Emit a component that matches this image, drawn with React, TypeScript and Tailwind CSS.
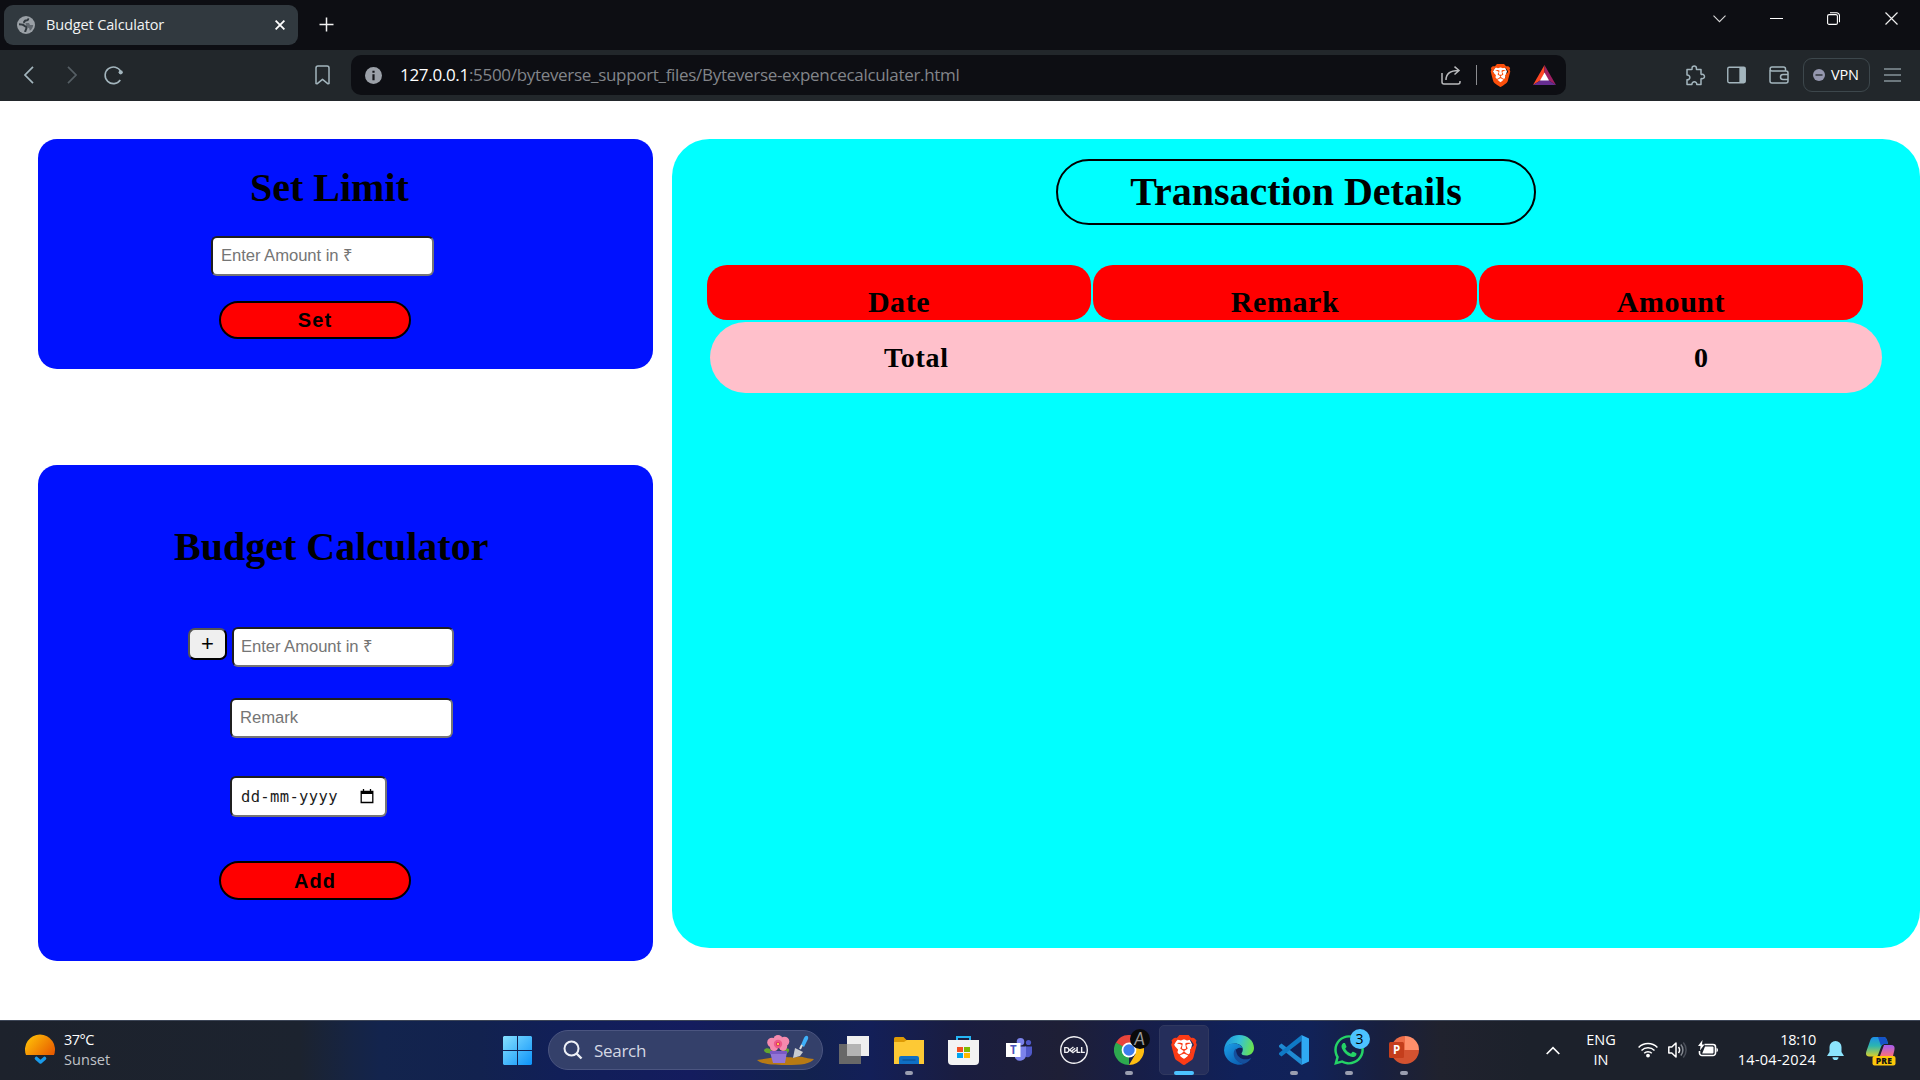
import React from "react";
import { SiBrave, SiDell } from "react-icons/si";
import { FaWhatsapp } from "react-icons/fa";

const UI = "font-['Open_Sans','Noto_Sans',sans-serif]";

function Globe() {
  return (
    <svg width="18" height="18" viewBox="0 0 18 18">
      <circle cx="9" cy="9" r="9" fill="#9aa0a6" />
      <path d="M11.200 2.300c.2 1.700-.8 2.300-2.400 2.300-1.400 0-1.300 1.800-2.600 2M2 8.300c2.600 0 4.300.2 5.200 1.300.7 1 2.300.6 2.300 2.200 0 1.500-1.200 2-1.300 4.200" fill="none" stroke="#31393f" strokeWidth="2" strokeLinejoin="round" />
      <path d="M8.500 7h3.500l1 2h3.200c-.2 2.500-1.400 4.500-3.400 5.800l-.6-2.600-3-1.500z" fill="#31393f" opacity=".55" />
    </svg>
  );
}

function BrowserTop() {
  return (
    <div className="flex h-[50px] bg-[#0d0e13]">
      <div className="mt-[5px] ml-1 flex h-10 w-[294px] items-center rounded-[9px] bg-[#31393f] pl-[13px]">
        <Globe />
        <span className="ml-[11px] w-[220px] text-[14.5px] leading-5 tracking-[-0.13px] text-[#f2f4f5]">Budget Calculator</span>
        <svg className="ml-[9px] shrink-0" width="10" height="10" viewBox="0 0 10 10" stroke="#fff" strokeWidth="1.8">
          <path d="M.6.6l8.800 8.800M9.400.6L.6 9.400" />
        </svg>
      </div>
      <svg className="mt-[17px] ml-[21px]" width="15" height="15" viewBox="0 0 15 15" stroke="#f1f1f1" strokeWidth="1.5">
        <path d="M7.500.5v14M.5 7.500h14" />
      </svg>
      <div className="ml-auto flex h-[37px] items-center">
        <svg className="mr-[44px]" width="13" height="8" viewBox="0 0 13 8" fill="none" stroke="#d8d8d8" strokeWidth="1.100">
          <path d="M.5.700l6 6 6-6" />
        </svg>
        <div className="mr-[44px] h-px w-[13px] bg-white" />
        <svg className="mr-[45px]" width="13" height="13" viewBox="0 0 13 13" fill="none" stroke="#fff" strokeWidth="1.100">
          <rect x=".6" y="2.600" width="9.800" height="9.800" rx="1.500" />
          <path d="M3 .7h6.500a3 3 0 0 1 3 3v6.500" />
        </svg>
        <svg className="mr-[22px]" width="13" height="13" viewBox="0 0 13 13" stroke="#eee" strokeWidth="1.200">
          <path d="M.5.5l12 12M12.500.5l-12 12" />
        </svg>
      </div>
    </div>
  );
}

function BraveShield({ w, h, color }: { w: number; h: number; color: string }) {
  return (
    <div className="grid place-items-center">
      <svg className="col-start-1 row-start-1" width={w * 0.7} height={h * 0.72} viewBox="0 0 20 24" fill="#fff">
        <path d="M3 0h14l3 6-3 12-7 6-7-6L0 6z" />
      </svg>
      <SiBrave className="col-start-1 row-start-1" size={h} color={color} />
    </div>
  );
}

function Toolbar() {
  return (
    <div className="flex h-[51px] items-center bg-[#22272b] pb-px">
      <svg className="ml-[24px]" width="10" height="18" viewBox="0 0 10 18" fill="none" stroke="#a3b5bd" strokeWidth="1.700">
        <path d="M9 .8L1 9l8 8.200" />
      </svg>
      <svg className="ml-[33px]" width="10" height="18" viewBox="0 0 10 18" fill="none" stroke="#555e64" strokeWidth="1.700">
        <path d="M1 .8L9 9l-8 8.200" />
      </svg>
      <svg className="ml-[27px]" width="20" height="20" viewBox="0 0 20 20" fill="none" stroke="#a3b5bd" strokeWidth="1.600">
        <path d="M16.800 6.500A8.300 8.300 0 1 0 16.300 15" />
        <circle cx="16.700" cy="7.300" r="2.100" fill="#a3b5bd" stroke="none" />
      </svg>
      <svg className="ml-[191px]" width="15" height="20" viewBox="0 0 15 20" fill="none" stroke="#a3b5bd" strokeWidth="1.500" strokeLinejoin="round">
        <path d="M1 3a2 2 0 0 1 2-2h9a2 2 0 0 1 2 2v15.500l-1 .3-5.500-4.500L2 18.800l-1-.3z" />
      </svg>
      <div className="ml-[21px] flex h-10 w-[1215px] items-center rounded-[10px] bg-[#0d0e13] pl-[14px]">
        <svg width="17" height="17" viewBox="0 0 17 17">
          <circle cx="8.500" cy="8.500" r="8.500" fill="#9ba0a8" />
          <path d="M7.400 3.800h2.200v2H7.400zM7.400 7.200h2.200v6H7.400z" fill="#15161b" />
        </svg>
        <span className="ml-[18px] text-[17px] leading-6 tracking-[-0.31px] whitespace-nowrap text-[#82858a]">
          <span className="text-white">127.0.0.1</span>:5500/byteverse_support_files/Byteverse-expencecalculater.html
        </span>
        <svg className="ml-auto" width="20" height="19" viewBox="0 0 20 19" fill="none" stroke="#b9babd" strokeWidth="1.500">
          <path d="M1 7v9a2 2 0 0 0 2 2h14a2 2 0 0 0 2-2v-1M5 14c0-6 4-9.500 12.500-9.500M13.500.6L18 4.500l-4.500 4" />
        </svg>
        <div className="ml-[15px] h-5 w-px bg-[#8b8c90]" />
        <div className="mr-px ml-[13px] flex w-5 justify-center">
          <BraveShield w={20} h={23} color="#fb4f0b" />
        </div>
        <svg className="mr-[10px] ml-[22px]" width="23" height="20" viewBox="0 0 23 20">
          <path d="M11.500 0L0 20l8-5 3.500-7z" fill="#ff4724" />
          <path d="M11.500 0L23 20l-8-5-3.500-7z" fill="#9e1f63" />
          <path d="M0 20h23l-8-5H8z" fill="#662d91" />
          <path d="M11.500 7.500L16 15.500H7z" fill="#fff" />
        </svg>
      </div>
      <svg className="ml-[119px]" width="21" height="21" viewBox="0 0 21 21" fill="none" stroke="#a3b5bd" strokeWidth="1.500" strokeLinejoin="round">
        <path d="M2 4.500h4.500c.6 0 .8-.4.6-1-.6-3.300 4.800-3.300 4.300 0-.1.6.1 1 .7 1H16v4.200c0 .6.4.8 1 .7 3.300-.5 3.300 4.700 0 4.200-.6-.1-1 .1-1 .7V19.500h-4.200c.3-3.700-5.200-3.700-4.900 0H2v-4.700c3.800.3 3.800-5 0-4.800z" />
      </svg>
      <svg className="ml-[21px]" width="19" height="18" viewBox="0 0 20 18">
        <rect x=".8" y=".8" width="18.400" height="16.400" rx="1.500" fill="none" stroke="#a3b5bd" strokeWidth="1.500" />
        <path d="M13 1h6v16h-6z" fill="#a3b5bd" />
      </svg>
      <svg className="ml-[23px]" width="20" height="18" viewBox="0 0 20 18" fill="none" stroke="#a3b5bd" strokeWidth="1.500">
        <path d="M1 4v11a2 2 0 0 0 2 2h14a2 2 0 0 0 2-2V7a2 2 0 0 0-2-2H3C.5 5 .5 1 3 1h11.500a2 2 0 0 1 2 2v2M19 8.500h-5a2.500 2.500 0 0 0 0 5h5" />
      </svg>
      <div className="ml-[14px] flex h-[34px] w-[67px] items-center rounded-[9px] border border-[#3d474c] pl-[9px]">
        <svg width="12" height="12" viewBox="0 0 12 12">
          <circle cx="6" cy="6" r="6" fill="#9496ad" />
          <path d="M2.500 6h7" stroke="#22272b" strokeWidth="1.300" />
        </svg>
        <span className="ml-[6px] text-[14.500px] leading-5 font-medium tracking-[-0.2px] text-white">VPN</span>
      </div>
      <svg className="ml-[14px]" width="17" height="14" viewBox="0 0 17 14" stroke="#86949b" strokeWidth="1.500">
        <path d="M0 1h17M0 7h17M0 13h17" />
      </svg>
    </div>
  );
}

const FIELD =
  "flex items-center rounded-[6px] border-2 border-t-[#1f1f1f] border-l-[#1f1f1f] border-r-[#767676] border-b-[#767676] bg-white pl-[8px] text-[16.67px] leading-5 text-[#757575] tracking-[-0.07px]";

function RedButton({ children, className }: { children: React.ReactNode; className: string }) {
  return (
    <button className={`${className} flex w-[192px] items-center justify-center rounded-[20px] border-2 border-black bg-[#ff0000] text-[20px] leading-6 font-bold tracking-[1.1px] text-black`}>
      {children}
    </button>
  );
}

function LeftColumn() {
  return (
    <div className="w-[615px] font-['Liberation_Sans',Arial,sans-serif]">
      <section className="flex h-[230px] flex-col items-start rounded-[19px] bg-[#0011ff] pt-[27px]">
        <h1 className="ml-[212px] font-['Liberation_Serif',serif] text-[40px] leading-[44px] font-bold text-black">Set Limit</h1>
        <div className={`${FIELD} mt-[26px] ml-[173px] h-10 w-[223px]`}>Enter Amount in ₹</div>
        <RedButton className="mt-[25px] ml-[181px] h-[38px]">Set</RedButton>
      </section>
      <section className="mt-[96px] flex h-[496px] flex-col items-start rounded-[19px] bg-[#0011ff] pt-[60px]">
        <h1 className="ml-[136px] font-['Liberation_Serif',serif] text-[40px] leading-[44px] font-bold text-black">Budget Calculator</h1>
        <div className="mt-[58px] ml-[150px] flex items-start">
          <button className="mt-px flex h-8 w-[39px] items-center justify-center rounded-[7px] border-2 border-t-[#555] border-r-black border-b-black border-l-[#555] bg-[#efefef] text-[22px] leading-5 text-black">+</button>
          <div className={`${FIELD} ml-[5px] h-10 w-[222px] -indent-px`}>Enter Amount in ₹</div>
        </div>
        <div className={`${FIELD} mt-[31px] ml-[192px] h-10 w-[223px]`}>Remark</div>
        <div className={`${FIELD} mt-[38px] ml-[192px] h-[41px] w-[157px]`}>
          <span className="w-[120px] pl-px font-['DejaVu_Sans_Mono',monospace] text-[15.500px] tracking-[0.35px] text-[#1c1c1c]">dd-mm-yyyy</span>
          <svg width="14" height="15" viewBox="0 0 14 15">
            <path d="M1.200 2.500h11.600v11H1.200zM3.500 0v3M10.500 0v3" fill="none" stroke="#000" strokeWidth="1.300" />
            <path d="M1 2h12v3H1z" />
          </svg>
        </div>
        <RedButton className="mt-[44px] ml-[181px] h-[39px] pt-px">Add</RedButton>
      </section>
    </div>
  );
}

function RightPanel() {
  return (
    <section className="ml-[19px] flex h-[809px] w-[1248px] flex-col rounded-[37.5px] bg-[#00ffff] pt-5 font-['Liberation_Serif',serif] font-bold text-black">
      <h1 className="ml-[384px] h-[66px] w-[480px] rounded-[33px] border-2 border-black pt-[9px] text-center text-[40px] leading-[44px]">
        Transaction Details
      </h1>
      <div className="mt-10 ml-[35px] flex gap-[2px] text-center text-[30px] leading-[34px] tracking-[0.55px]">
        {["Date", "Remark", "Amount"].map((t) => (
          <div key={t} className="h-[55px] w-[384px] rounded-[20px] bg-[#ff0000] pt-[20px]">
            {t}
          </div>
        ))}
      </div>
      <div className="mt-[2px] ml-[38px] flex h-[71px] w-[1172px] rounded-[36px] bg-[#ffc0cb] pt-[20px] text-[28px] leading-8">
        <span className="ml-[174px] tracking-[0.7px]">Total</span>
        <span className="mr-[174px] ml-auto">0</span>
      </div>
    </section>
  );
}

function TaskCell({ children, run, active }: { children: React.ReactNode; run?: boolean; active?: boolean }) {
  return (
    <div className="flex w-[55px] shrink-0 justify-center">
      <div className={active ? "relative mt-[4px] flex h-[50px] w-[50px] items-center justify-center rounded-[5px] border border-[#30385f] bg-[#252e5b]" : "relative mt-[4px] flex h-[50px] w-[50px] items-center justify-center"}>
        {children}
        {run && <div className="absolute bottom-0 left-[21px] h-1 w-2 rounded-full bg-[#9a9eb0]" />}
        {active && <div className="absolute -bottom-px left-[14px] h-1 w-5 rounded-full bg-[#4cc2ff]" />}
      </div>
    </div>
  );
}

function Taskbar() {
  return (
    <footer className="flex h-[60px] border-t border-[#3d4657] bg-[linear-gradient(90deg,#1d222c_0px,#1c232f_300px,#162443_350px,#13244d_380px,#12224f_480px,#111f58_560px,#141c5e_690px,#12224e_800px,#131f58_870px,#1a1d40_960px,#1e1f36_1060px,#171e48_1140px,#10215a_1240px,#112258_1310px,#181f3f_1380px,#20222e_1440px,#1c212b_1530px,#1c212b_1920px)]">
      <svg className="mt-[12px] ml-[25px]" width="30" height="32" viewBox="0 0 30 32">
        <defs>
          <linearGradient id="sun" x1="0" y1=".2" x2="1" y2=".8">
            <stop offset="0" stopColor="#ffc107" />
            <stop offset="1" stopColor="#e85d00" />
          </linearGradient>
        </defs>
        <path d="M1 22A15 15 0 1 1 29 22z" fill="url(#sun)" />
        <path d="M11.500 25.500l4 3.500 4-3.500" fill="none" stroke="#1a9bea" strokeWidth="3.600" strokeLinecap="round" strokeLinejoin="round" />
      </svg>
      <div className="mt-[9px] ml-[9px] w-[439px] text-[14.500px] leading-5 text-white">
        <div className="tracking-[-0.5px]">37°C</div>
        <div className="tracking-[0.050px] text-[#c0c3c8]">Sunset</div>
      </div>
      <svg className="mt-[15px]" width="29" height="29" viewBox="0 0 29 29">
        <defs>
          <linearGradient id="win" x1="0" y1="0" x2="1" y2="1" gradientUnits="objectBoundingBox">
            <stop offset="0" stopColor="#86e0ff" />
            <stop offset="1" stopColor="#0c93fa" />
          </linearGradient>
        </defs>
        <path d="M1 0h13v14H0V1zM15 0h13l1 1v13H15zM0 15h14v14H1l-1-1zM15 15h14v13l-1 1H15z" fill="url(#win)" />
      </svg>
      <div className="mt-[9px] ml-[16px] flex h-10 w-[275px] items-center rounded-full border border-[#4b5580] bg-[#34406a] pl-[14px]">
        <svg width="20" height="20" viewBox="0 0 20 20" fill="none" stroke="#eef0f6" strokeWidth="2">
          <circle cx="8.500" cy="8.500" r="7" />
          <path d="M13.500 13.500l5 5" strokeWidth="2.400" />
        </svg>
        <span className="ml-[11px] pt-px text-[17px] leading-6 tracking-[-0.3px] text-[#d4d8e4]">Search</span>
        <svg className="mr-[8px] ml-auto" width="57" height="30" viewBox="0 0 57 30">
          <path d="M0 25c8-1 15-3 26-3 6 0 10 1 14 0 6-1 9 2 17 2-4 5-12 6-28 6S4 29 0 25z" fill="#b87a14" />
          <path d="M7 15c2-3 7-2 9 3-4 1-9 0-9-3zM32 14c-4-2-8 1-8 5 4 1 9-1 8-5z" fill="#63a62f" />
          <path d="M13 17h17l-2 11h-12z" fill="#9375d8" />
          <path d="M13 16h17v3H13z" fill="#7959c4" />
          <g fill="#f58aae">
            <circle cx="21" cy="4.500" r="4.500" />
            <circle cx="15" cy="7.500" r="4.800" />
            <circle cx="27.500" cy="6.500" r="4.800" />
            <circle cx="17" cy="12" r="4" />
            <circle cx="26" cy="11.500" r="4.200" />
          </g>
          <circle cx="21" cy="9" r="4.200" fill="#ec5a8a" />
          <circle cx="21" cy="9" r="2" fill="#d9265f" />
          <circle cx="21" cy="9" r="1.200" fill="#ffca4a" />
          <path d="M47 3c2-4 5-2 4 1l-4 8-3-2z" fill="#3fb0fa" />
          <path d="M45 10l-2 4" stroke="#ddd" strokeWidth="2" />
          <path d="M38 13l8 4-3 4-7 2z" fill="#c9ccd1" />
        </svg>
      </div>
      <div className="ml-[3px] flex">
        <TaskCell>
          <svg width="30" height="28" viewBox="0 0 30 28">
            <path d="M0 8h22v20H0z" fill="#686868" />
            <path d="M8 0h22v20H8z" fill="#efefef" />
            <path d="M8 8h14v12H8z" fill="#b4b4b4" />
          </svg>
        </TaskCell>
        <TaskCell run>
          <svg width="30" height="27" viewBox="0 0 30 27">
            <path d="M0 1.500Q0 0 1.500 0h8l3 3H30v8H0z" fill="#dd9a05" />
            <path d="M0 5h10l3-2h17v24H0z" fill="#fdc935" />
            <path d="M5 27v-6q0-2 2-2h16q2 0 2 2v6z" fill="#0f6fc4" />
            <path d="M8.500 23h13" stroke="#0a4f94" strokeWidth="1.200" />
          </svg>
        </TaskCell>
        <TaskCell>
          <svg width="31" height="29" viewBox="0 0 31 29">
            <path d="M9 6V1h13v5" fill="none" stroke="#25b5f5" strokeWidth="2" />
            <path d="M0 4h31v21q0 4-4 4H4q-4 0-4-4z" fill="#f3f3f3" />
            <path d="M9 11h6v5H9z" fill="#f25022" />
            <path d="M16 11h6v5h-6z" fill="#7fba00" />
            <path d="M9 17h6v5H9z" fill="#00a4ef" />
            <path d="M16 17h6v5h-6z" fill="#ffb900" />
          </svg>
        </TaskCell>
        <TaskCell>
          <svg width="26" height="24" viewBox="0 0 26 24">
            <circle cx="22.500" cy="4.500" r="2.600" fill="#5059c9" />
            <circle cx="14.500" cy="3.800" r="3.800" fill="#7b83eb" />
            <path d="M19 8.500h7V15a4.500 4.500 0 0 1-7 3.500z" fill="#5059c9" />
            <path d="M9 8.500h11V17a6 6 0 0 1-11 3z" fill="#7b83eb" />
            <path d="M0 5h14.500v14H0z" fill="#fff" />
            <text x="7.300" y="16" fontSize="11.500" fontWeight="700" fontFamily="Open Sans" fill="#4b53bc" textAnchor="middle">T</text>
          </svg>
        </TaskCell>
        <TaskCell>
          <SiDell size={28} color="#f1f1f4" />
        </TaskCell>
        <TaskCell run>
          <svg width="30" height="30" viewBox="0 0 30 30">
            <path d="M15 15L2 7.500A15 15 0 0 1 28 7.500z" fill="#e8453c" />
            <path d="M15 15v15A15 15 0 0 1 2 7.500z" fill="#2da94f" />
            <path d="M15 7.500h13A15 15 0 0 1 15 30l6.500-11z" fill="#fdbd12" />
            <path d="M2 7.500l6.500 11.250L15 15z" fill="#2da94f" />
            <path d="M2 7.500h13v7z" fill="#e8453c" />
            <circle cx="15" cy="15" r="7.400" fill="#fff" />
            <circle cx="15" cy="15" r="5.700" fill="#3b7ded" />
          </svg>
          <div className="absolute top-[4px] left-[26px] flex h-5 w-5 items-center justify-center rounded-full bg-[#0a0a0a] font-['Lato',sans-serif] text-[17px] leading-5 italic text-[#9a9a9a]">A</div>
        </TaskCell>
        <TaskCell active>
          <BraveShield w={26} h={30} color="#fb3b16" />
        </TaskCell>
        <TaskCell>
          <svg width="30" height="30" viewBox="0 0 30 30">
            <defs>
              <linearGradient id="edgeTop" x1="0" y1=".3" x2="1" y2=".5">
                <stop offset="0" stopColor="#1c93dc" />
                <stop offset=".5" stopColor="#35c1d8" />
                <stop offset="1" stopColor="#6ae34c" />
              </linearGradient>
              <linearGradient id="edgeLow" x1="0" y1="0" x2=".8" y2="1">
                <stop offset="0" stopColor="#1ba0e8" />
                <stop offset="1" stopColor="#0b5cb0" />
              </linearGradient>
            </defs>
            <path d="M0 15C1 6 7 0 15 0c9 0 15 6 15 13 0 5-4 7.500-8 7.500-3 0-4.500-1-4.500-2 0-.8 1.300-1.500 1.300-4C18.800 11 15 8.500 11 8.500 5 8.500 1 12 0 15z" fill="url(#edgeTop)" />
            <path d="M0 15c1-4 5-6.500 10-6.500 4 0 7.500 2 8.500 4.500-6-1.500-9 3-7.500 8 1.500 5 6.500 8 10 7.500A15 15 0 0 1 0 15z" fill="url(#edgeLow)" />
            <path d="M11.800 13.500c-5 5-.5 15 9 15 3-1 5-3 6.500-5.500-6 3-15 1.500-15.500-9.500z" fill="#154f9c" />
          </svg>
        </TaskCell>
        <TaskCell run>
          <svg width="30" height="30" viewBox="0 0 30 30">
            <path d="M0 10.500L2.500 8.500l20 15.500v6L0 12z" fill="#1f8ad2" />
            <path d="M0 19.500L2.500 21.500l20-15.500V0L0 18z" fill="#0f79c5" />
            <path d="M22.500 0L30 3.500v23L22.500 30z" fill="#2fa9f4" />
          </svg>
        </TaskCell>
        <TaskCell run>
          <FaWhatsapp size={34} color="#25d366" />
          <div className="absolute top-[4px] left-[26px] flex h-5 w-5 items-center justify-center rounded-full bg-[#4cc2ff] text-[14px] leading-5 text-black">3</div>
        </TaskCell>
        <TaskCell run>
          <svg width="30" height="28" viewBox="0 0 30 28">
            <path d="M16 0a14 14 0 0 0-14 14h14z" fill="#ed6c47" />
            <path d="M16 0a14 14 0 0 1 14 14H16z" fill="#ff8f6b" />
            <path d="M2 14h28a14 14 0 0 1-28 0z" fill="#d35230" />
            <rect x="0" y="6" width="15" height="16" rx="1.500" fill="#c43e1c" />
            <text x="7.500" y="18" fontSize="11.500" fontWeight="700" fontFamily="Open Sans" fill="#fff" textAnchor="middle">P</text>
          </svg>
        </TaskCell>
      </div>
      <svg className="mt-[25px] ml-[115px]" width="14" height="9" viewBox="0 0 14 9" fill="none" stroke="#fff" strokeWidth="1.700">
        <path d="M.7 8L7 1.700 13.300 8" />
      </svg>
      <div className="mt-[9px] ml-[21px] w-10 text-center text-[14.500px] leading-5 text-white">
        ENG
        <br />
        IN
      </div>
      <svg className="mt-[21px] ml-[17px]" width="20" height="16" viewBox="0 0 20 16" fill="none" stroke="#fff" strokeWidth="1.500">
        <path d="M.6 5.500a13.300 13.300 0 0 1 18.800 0M3.500 8.500a9.200 9.200 0 0 1 13 0M6.200 11.300a5.300 5.300 0 0 1 7.600 0" />
        <circle cx="10" cy="13.600" r="1.900" fill="#fff" stroke="none" />
      </svg>
      <svg className="mt-[20px] ml-[10px]" width="20" height="18" viewBox="0 0 20 18" fill="none" stroke="#fff" strokeWidth="1.500">
        <path d="M.8 6v6h3l4.200 4V2L3.800 6zM10.500 6a5 5 0 0 1 0 6" strokeLinejoin="round" />
        <path d="M12.800 3.600a8 8 0 0 1 0 10.800" stroke="#858a92" />
        <path d="M15.300 1.500a11.500 11.500 0 0 1 0 15" stroke="#4b505a" />
      </svg>
      <svg className="mt-[19px] ml-[10px]" width="21" height="18" viewBox="0 0 21 18">
        <path d="M6.500 4.500H15a2.500 2.500 0 0 1 2.500 2.500v6a2.500 2.500 0 0 1-2.500 2.500H4A2.500 2.500 0 0 1 1.500 13v-2" fill="none" stroke="#fff" strokeWidth="1.600" />
        <path d="M7 6.500h7.500q1 0 1 1v5q0 1-1 1H4.200z" fill="#fff" />
        <path d="M18.500 8q1.500 0 1.500 2t-1.500 2zM4.500 0L0 6h2.500L2 10.500 6.500 4.500H4z" fill="#fff" />
      </svg>
      <div className="mt-[9px] ml-[7px] w-[90px] text-right text-[14.500px] leading-5 text-white">
        <div className="tracking-[-0.25px]">18:10</div>
        <div className="tracking-[0.25px]">14-04-2024</div>
      </div>
      <svg className="mt-[20px] ml-[11px]" width="17" height="19" viewBox="0 0 17 19" fill="#8ce4fd">
        <path d="M8.500 0a6 6 0 0 1 6 6v5l2.500 4H0l2.500-4V6a6 6 0 0 1 6-6zM5.500 16.200h6a3 2.800 0 0 1-6 0z" />
      </svg>
      <svg className="mt-[16px] ml-[22px]" width="30" height="29" viewBox="0 0 30 29">
        <defs>
          <linearGradient id="copA" x1="0" y1="0" x2="0" y2="1">
            <stop offset="0" stopColor="#1e8fe8" />
            <stop offset=".45" stopColor="#2bb5b0" />
            <stop offset="1" stopColor="#d8cf2a" />
          </linearGradient>
          <linearGradient id="copB" x1="0" y1="0" x2="0" y2="1">
            <stop offset="0" stopColor="#a45cf0" />
            <stop offset="1" stopColor="#fb6f7c" />
          </linearGradient>
        </defs>
        <path d="M8 0h10q2 0 3 3l1 4h-4q-2 0-3 3l-3 8q-.500 1.500-2 1.500H3q-4 0-2.700-5L4 4q1-4 4-4z" fill="url(#copA)" />
        <path d="M12 0h6q2 0 3 3l1 4h-4q-2 0-3 2z" fill="#1553c7" />
        <path d="M18 8h7q4.500 0 3.400 5L27 19H14z" fill="url(#copB)" />
        <rect x="6.500" y="19" width="23" height="9.500" rx="2" fill="#fdc80a" />
        <text x="18" y="27" fontSize="8.500" fontWeight="800" fontFamily="Open Sans" textAnchor="middle" letterSpacing=".3" fill="#141414">PRE</text>
      </svg>
    </footer>
  );
}

export default function App() {
  return (
    <div className={`${UI} flex h-[1080px] w-[1920px] flex-col overflow-hidden bg-white`}>
      <BrowserTop />
      <Toolbar />
      <main className="flex h-[919px] items-start pt-[38px] pl-[38px]">
        <LeftColumn />
        <RightPanel />
      </main>
      <Taskbar />
    </div>
  );
}
